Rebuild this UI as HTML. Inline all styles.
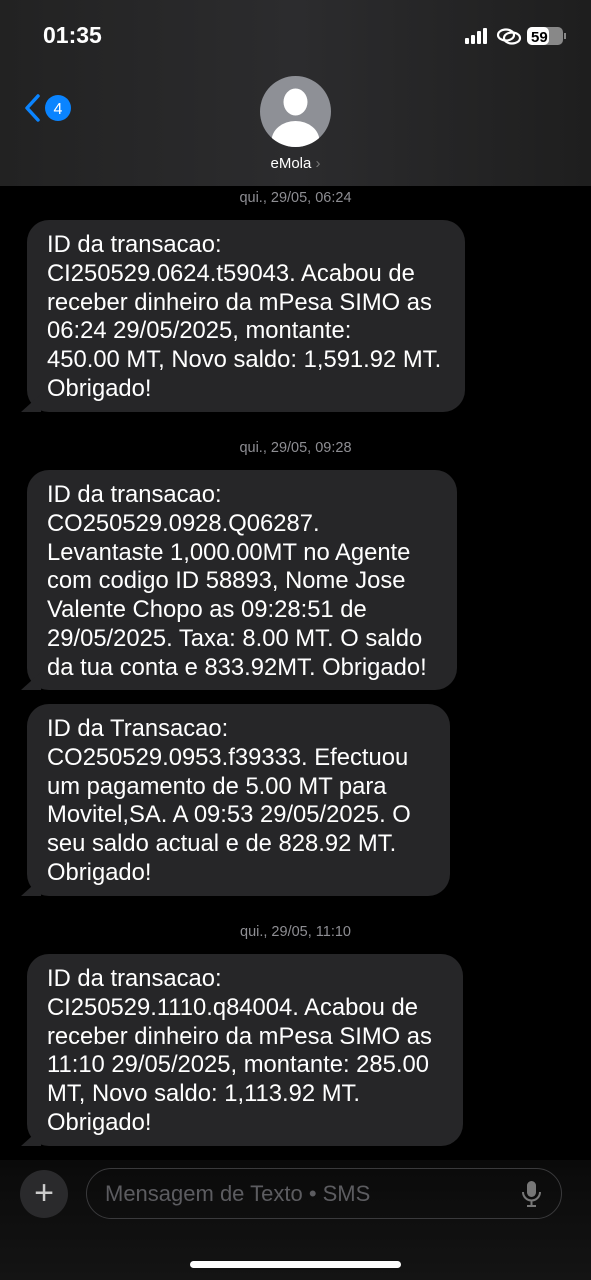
<!DOCTYPE html>
<html><head><meta charset="utf-8"><style>
*{margin:0;padding:0;box-sizing:border-box}
body{width:591px;height:1280px;background:#000;font-family:"Liberation Sans",sans-serif;position:relative;overflow:hidden;color:#fff}
.hdr{position:absolute;left:0;top:0;width:591px;height:186px;background:linear-gradient(90deg,#222 0%,#2c2c2e 50%,#1e1e1e 100%)}
.time{position:absolute;left:43px;top:22px;font-size:23px;font-weight:bold}
.ts{position:absolute;width:591px;text-align:center;font-size:14.5px;color:#8e8e93}
.b{position:absolute;left:27px;background:#262628;border-radius:22px;padding:11px 0 0 20px;font-size:23.8px;line-height:28.8px;white-space:nowrap}
.b:before{content:"";position:absolute;left:-6px;bottom:0;width:20px;height:18px;background:#262628;clip-path:polygon(0 100%,100% 0,100% 100%)}
</style></head><body>
<div class="hdr">
<div class="time">01:35</div>
<svg style="position:absolute;left:465px;top:27px" width="105" height="20">
<rect x="0" y="11" width="4" height="6" rx="1" fill="#fff"/><rect x="6" y="8" width="4" height="9" rx="1" fill="#fff"/><rect x="12" y="4" width="4" height="13" rx="1" fill="#fff"/><rect x="18" y="1" width="4" height="16" rx="1" fill="#fff"/>
<g fill="none" stroke="#fff" stroke-width="2.2"><ellipse cx="41" cy="8" rx="8" ry="5.5"/><ellipse cx="47" cy="11" rx="8" ry="5.5"/></g>
<rect x="62" y="0" width="36" height="18" rx="5" fill="#888"/><rect x="62" y="0" width="22" height="18" rx="5" fill="#fff"/>
<text x="66" y="15" font-size="15" font-weight="bold" font-family="Liberation Sans" fill="#000">59</text>
<rect x="99" y="6" width="2" height="6" fill="#888"/>
</svg>
<svg style="position:absolute;left:22px;top:93px" width="50" height="32"><path d="M16 3 L5 15 L16 27" stroke="#0a84ff" stroke-width="3.5" fill="none" stroke-linecap="round" stroke-linejoin="round"/><circle cx="36" cy="15" r="13" fill="#0a84ff"/><text x="36" y="21" text-anchor="middle" font-size="16" fill="#fff" font-family="Liberation Sans">4</text></svg>
<svg style="position:absolute;left:260px;top:76px" width="71" height="71"><defs><clipPath id="c"><circle cx="35.5" cy="35.5" r="35.5"/></clipPath></defs><circle cx="35.5" cy="35.5" r="35.5" fill="#8e9096"/><g clip-path="url(#c)" fill="#fff"><ellipse cx="35.5" cy="26" rx="12" ry="13.5"/><ellipse cx="35.5" cy="65" rx="24" ry="20"/></g></svg>
<div style="position:absolute;left:0;width:591px;top:155px;text-align:center;font-size:15px">eMola <span style="color:#777">›</span></div>
</div>
<div class="ts" style="top:190px">qui., 29/05, 06:24</div>
<div class="b" style="top:220px;width:438px;height:192px">ID da transacao:<br>CI250529.0624.t59043. Acabou de<br>receber dinheiro da mPesa SIMO as<br>06:24 29/05/2025, montante:<br>450.00 MT, Novo saldo: 1,591.92 MT.<br>Obrigado!</div>
<div class="ts" style="top:440px">qui., 29/05, 09:28</div>
<div class="b" style="top:470px;width:430px;height:220px">ID da transacao:<br>CO250529.0928.Q06287.<br>Levantaste 1,000.00MT no Agente<br>com codigo ID 58893, Nome Jose<br>Valente Chopo as 09:28:51 de<br>29/05/2025. Taxa: 8.00 MT. O saldo<br>da tua conta e 833.92MT. Obrigado!</div>
<div class="b" style="top:704px;width:423px;height:192px">ID da Transacao:<br>CO250529.0953.f39333. Efectuou<br>um pagamento de 5.00 MT para<br>Movitel,SA. A 09:53 29/05/2025. O<br>seu saldo actual e de 828.92 MT.<br>Obrigado!</div>
<div class="ts" style="top:924px">qui., 29/05, 11:10</div>
<div class="b" style="top:954px;width:436px;height:192px">ID da transacao:<br>CI250529.1110.q84004. Acabou de<br>receber dinheiro da mPesa SIMO as<br>11:10 29/05/2025, montante: 285.00<br>MT, Novo saldo: 1,113.92 MT.<br>Obrigado!</div>
<div style="position:absolute;left:0;top:1160px;width:591px;height:120px;background:linear-gradient(#0a0a0a,#141414)"></div>
<div style="position:absolute;left:20px;top:1170px;width:48px;height:48px;border-radius:50%;background:#2a2a2c;color:#ccc;font-size:34px;line-height:46px;text-align:center">+</div>
<div style="position:absolute;left:86px;top:1168px;width:476px;height:51px;border:1px solid #3a3a3c;border-radius:26px"></div>
<div style="position:absolute;left:105px;top:1181px;font-size:22px;color:#5c5c60">Mensagem de Texto • SMS</div>
<svg style="position:absolute;left:520px;top:1180px" width="24" height="28"><rect x="7" y="1" width="9" height="16" rx="4.5" fill="#777"/><path d="M3 12 a8.5 8.5 0 0 0 17 0 M11.5 21 V25 M7 26 H16" stroke="#777" stroke-width="2" fill="none"/></svg>
<div style="position:absolute;left:190px;top:1261px;width:211px;height:7px;border-radius:4px;background:#fff"></div>
</body></html>
